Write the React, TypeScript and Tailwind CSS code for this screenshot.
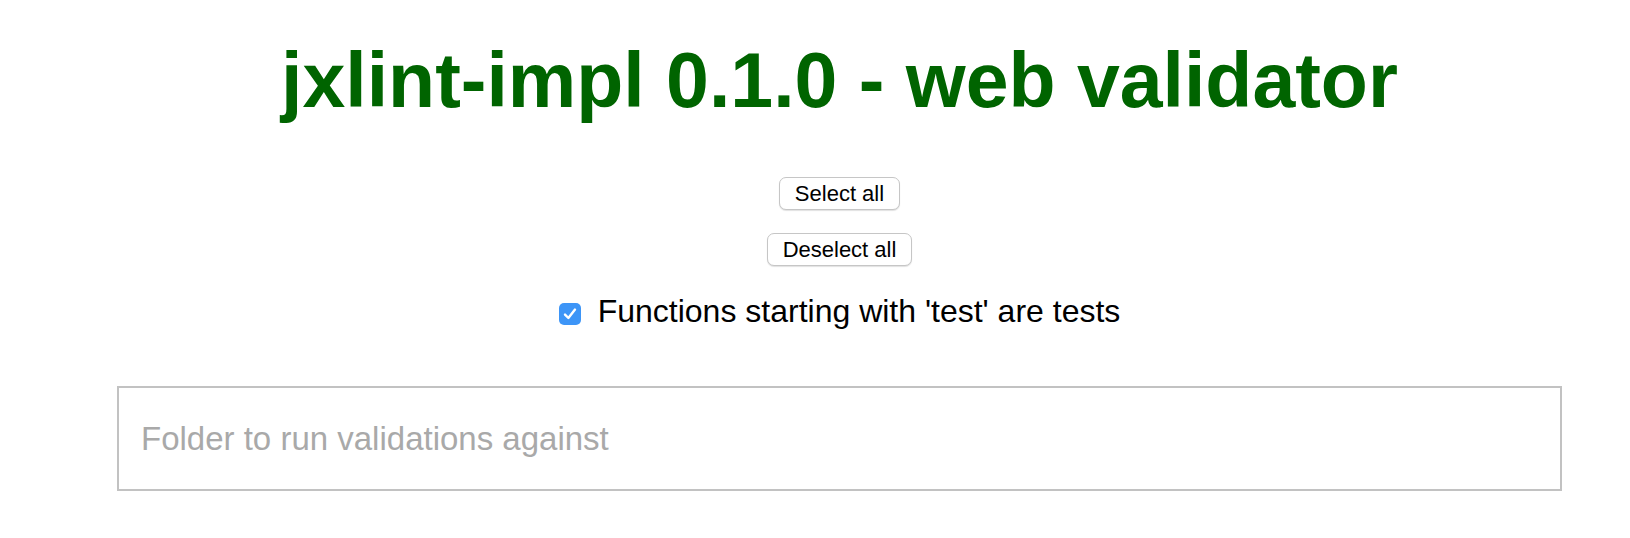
export default function App() {
  return (
    <main
      className="min-h-screen bg-white pl-[49px] text-black"
      style={{ fontFamily: '"Liberation Sans", Arial, Helvetica, sans-serif' }}
    >
      <div className="flex flex-col items-center">
        {/* Title */}
        <h1 className="mt-[36px] text-[77px] font-bold leading-[88px] text-[#006400]">
          jxlint-impl 0.1.0 - web validator
        </h1>

        {/* Selection buttons */}
        <button className="mt-[53px] h-[33px] rounded-[7px] border border-[#c6c6c6] bg-white px-[15px] text-[22px] leading-none text-black shadow-[0_1px_1px_rgba(0,0,0,0.12)]">
          Select all
        </button>
        <button className="mt-[23px] h-[33px] rounded-[7px] border border-[#c6c6c6] bg-white px-[15px] text-[22px] leading-none text-black shadow-[0_1px_1px_rgba(0,0,0,0.12)]">
          Deselect all
        </button>

        {/* Test option */}
        <label className="mt-[27px] flex items-center gap-[17px] text-[32px] leading-[36px]">
          <span className="mt-[5px] flex h-[22px] w-[22px] items-center justify-center rounded-[5px] bg-[#3d95f7]">
            <svg width="16" height="16" viewBox="0 0 16 16" fill="none">
              <path
                d="M3 8.6 L6.4 12 L13 3.6"
                stroke="white"
                strokeWidth="2.4"
                strokeLinecap="round"
                strokeLinejoin="round"
              />
            </svg>
          </span>
          <span>Functions starting with 'test' are tests</span>
        </label>

        {/* Folder input */}
        <input
          type="text"
          placeholder="Folder to run validations against"
          className="mt-[57px] h-[105px] w-[1445px] border-2 border-[#c2c2c2] bg-white px-[22px] text-[33px] text-black outline-none placeholder:text-[#a9a9a9]"
        />
      </div>
    </main>
  );
}
